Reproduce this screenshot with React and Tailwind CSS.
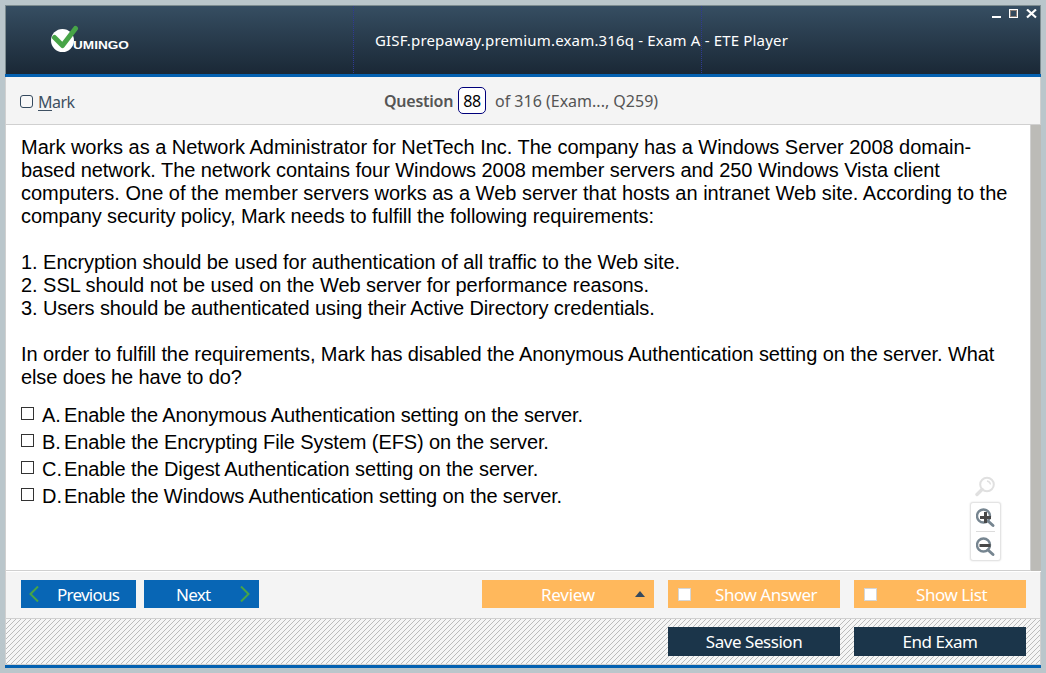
const question = [
  { text: 'Mark works as a Network Administrator for NetTech Inc. The company has a Windows Server 2008 domain-', track: 'tracking-[-0.02px]' },
  { text: 'based network. The network contains four Windows 2008 member servers and 250 Windows Vista client', track: 'tracking-[-0.055px]' },
  { text: 'computers. One of the member servers works as a Web server that hosts an intranet Web site. According to the', track: 'tracking-[0px]' },
  { text: 'company security policy, Mark needs to fulfill the following requirements:', track: 'tracking-[-0.08px]' },
  { text: '', track: '' },
  { text: '1. Encryption should be used for authentication of all traffic to the Web site.', track: 'tracking-[-0.05px]' },
  { text: '2. SSL should not be used on the Web server for performance reasons.', track: 'tracking-[-0.05px]' },
  { text: '3. Users should be authenticated using their Active Directory credentials.', track: 'tracking-[-0.12px]' },
  { text: '', track: '' },
  { text: 'In order to fulfill the requirements, Mark has disabled the Anonymous Authentication setting on the server. What', track: 'tracking-[-0.095px]' },
  { text: 'else does he have to do?', track: 'tracking-[-0.11px]' },
];

const answers = [
  { letter: 'A.', text: 'Enable the Anonymous Authentication setting on the server.', track: 'tracking-[-0.16px]' },
  { letter: 'B.', text: 'Enable the Encrypting File System (EFS) on the server.', track: 'tracking-[-0.1px]' },
  { letter: 'C.', text: 'Enable the Digest Authentication setting on the server.', track: 'tracking-[-0.11px]' },
  { letter: 'D.', text: 'Enable the Windows Authentication setting on the server.', track: 'tracking-[-0.12px]' },
];

function Logo() {
  return (
    <div className="relative flex h-[30px] w-[90px]">
      <svg width="30" height="28" viewBox="0 0 30 28" className="shrink-0">
        <circle cx="12.5" cy="15.5" r="11.5" fill="#fff" />
        <path d="M4.5 12.5 L12.5 20.5 L25.5 3.5" fill="none" stroke="#47a447" strokeWidth="5" strokeLinecap="round" strokeLinejoin="round" />
      </svg>
      <span className="absolute left-[23px] top-[16px] origin-left scale-x-[1.36] font-['Liberation_Sans'] text-[10px] font-bold leading-[10px] text-white">UMINGO</span>
    </div>
  );
}

function Header() {
  return (
    <header className="flex h-[69px] border-x border-t border-[#7d8c90] bg-linear-to-b from-[#364e62] to-[#1a2836]">
      <div className="w-[347px] shrink-0 pl-[44px] pt-[19px]">
        <Logo />
      </div>
      <div className="w-px shrink-0 bg-[repeating-linear-gradient(to_bottom,#2f3a94_0_1px,transparent_1px_2px)]" />
      <h1 className="flex w-[347px] shrink-0 justify-start whitespace-nowrap pl-[21px] pt-[23px] font-['Noto_Sans',sans-serif] text-[15px] leading-[22px] tracking-[0.17px] text-white">
        GISF.prepaway.premium.exam.316q - Exam A - ETE Player
      </h1>
      <div className="w-px shrink-0 bg-[repeating-linear-gradient(to_bottom,#2f3a94_0_1px,transparent_1px_2px)]" />
      <div className="flex flex-1 justify-end pr-[3px] pt-[3px]">
        <svg width="46" height="10" viewBox="0 0 46 10" shapeRendering="crispEdges">
          <rect x="1" y="7" width="9" height="2" fill="#fff" />
          <rect x="18.5" y="0.5" width="8" height="8" fill="none" stroke="#fff" />
          <rect x="19.5" y="1.5" width="6" height="6" fill="none" stroke="#8b7f78" />
          <path d="M36 0.5 L45 8.5 M45 0.5 L36 8.5" stroke="#fff" strokeWidth="2.2" shapeRendering="auto" />
        </svg>
      </div>
    </header>
  );
}

function QuestionBar() {
  return (
    <div className="flex h-[48px] items-start border-x border-b border-[#d0d0d0] bg-[#f4f4f4] font-['Noto_Sans',sans-serif] text-base leading-[22px] text-[#555]">
      <div className="flex w-[378px] pl-[14px] pt-[14px] text-[#3e5062]">
        <span className="mt-[4px] size-[13px] rounded-[3px] border border-[#34495e] bg-[#f8f8f8]" />
        <span className="ml-[5px] tracking-[-0.5px]"><span className="underline underline-offset-2">M</span>ark</span>
      </div>
      <span className="w-[70px] whitespace-nowrap pt-[13px] font-semibold tracking-[-0.25px]">Question</span>
      <span className="ml-[4px] mt-[10px] flex h-[27px] w-[28px] items-center justify-center rounded-[5px] border border-[#00007b] bg-white pt-px tracking-[-0.3px] text-black">88</span>
      <span className="ml-[9px] whitespace-nowrap pt-[13px]">of 316 (Exam..., Q259)</span>
    </div>
  );
}

function ZoomTools() {
  return (
    <div className="absolute left-[964px] top-[350px] flex flex-col items-center">
      <svg width="22" height="22" viewBox="1 0 22 22" fill="none" stroke="#e0e0e0">
        <circle cx="13" cy="9.5" r="6.8" strokeWidth="2" />
        <path d="M8 14.5 L3 19.5" strokeWidth="3.4" strokeLinecap="round" />
        <path d="M13 6 Q16 6.5 16.5 9.5" strokeWidth="1.3" />
      </svg>
      <div className="mt-[5px] flex h-[59px] w-[31px] flex-col items-center rounded-[3px] border border-[#e4e4e4] bg-white shadow-[0_0_2px_#ddd]">
        <svg width="20" height="28" viewBox="1 0 20 28" fill="none">
          <circle cx="8.5" cy="13" r="6.5" stroke="#768590" strokeWidth="2.4" />
          <path d="M13 18 L18 22.5" stroke="#768590" strokeWidth="3" strokeLinecap="round" />
          <path d="M5 14.5 H16 M10.5 9 V20" stroke="#484848" strokeWidth="3" />
        </svg>
        <div className="h-px w-[19px] shrink-0 bg-[#dcdcdc]" />
        <svg width="20" height="28" viewBox="1 0 20 28" fill="none">
          <circle cx="8.5" cy="13" r="6.5" stroke="#768590" strokeWidth="2.4" />
          <path d="M13 18 L18 22.5" stroke="#768590" strokeWidth="3" strokeLinecap="round" />
          <path d="M4.5 13.5 H15.5" stroke="#484848" strokeWidth="3" />
        </svg>
      </div>
    </div>
  );
}

function Content() {
  return (
    <main className="relative flex h-[447px] border-l border-[#d0d0d0] bg-white">
      <div className="h-[446px] flex-1 border-b border-[#d0d0d0] pl-[15px] pt-[11px] font-['Liberation_Sans',sans-serif] text-[20px] text-black">
        {question.map((line, i) => (
          <p key={i} className="h-[23px] whitespace-nowrap leading-[23px]">
            <span className={line.track}>{line.text}</span>
          </p>
        ))}
        <div className="mt-[13px]">
          {answers.map((a) => (
            <div key={a.letter} className="flex h-[27px] whitespace-nowrap leading-[27px]">
              <span className="mt-[5px] size-[13px] shrink-0 border border-[#333] bg-white" />
              <span className="ml-[8px] w-[22px] shrink-0">{a.letter}</span>
              <span className={a.track}>{a.text}</span>
            </div>
          ))}
        </div>
      </div>
      <div className="h-[446px] w-[11px] shrink-0 border-l border-[#d0d0d0] bg-[#bcbbb7]" />
      <ZoomTools />
    </main>
  );
}

function Toolbar() {
  return (
    <div className="flex h-[47px] border-x border-b border-[#d0d0d0] bg-[#f4f4f4] pl-[15px] pt-[8px] font-['Noto_Sans',sans-serif] text-[17px] leading-[26px] text-white">
      <button className="flex h-[28px] w-[115px] items-center bg-[#0866b5] pl-[8px]">
        <svg width="10" height="16" viewBox="0 0 10 16"><path d="M9 0.5 L1.5 8 L9 15.5" fill="none" stroke="#47a447" strokeWidth="2" /></svg>
        <span className="ml-[18px] pt-[2px] tracking-[-0.75px]">Previous</span>
      </button>
      <button className="ml-[8px] flex h-[28px] w-[115px] items-center bg-[#0866b5] pl-[32px]">
        <span className="w-[64px] pt-[2px] text-left tracking-[-0.75px]">Next</span>
        <svg width="10" height="16" viewBox="0 0 10 16"><path d="M1 0.5 L8.5 8 L1 15.5" fill="none" stroke="#47a447" strokeWidth="2" /></svg>
      </button>
      <button className="ml-[223px] flex h-[28px] w-[172px] items-center bg-[#ffb85c] pl-[59px]">
        <span className="w-[94px] pt-[2px] text-left tracking-[-0.25px]">Review</span>
        <svg width="10" height="6" viewBox="0 0 10 6"><path d="M5 0 L10 6 H0 Z" fill="#34495e" /></svg>
      </button>
      <button className="ml-[14px] flex h-[28px] w-[172px] items-center bg-[#ffb85c] pl-[10px]">
        <span className="size-[13px] border border-[#d5d5d5] bg-white" />
        <span className="ml-[24px] pt-[2px] tracking-[-0.45px]">Show Answer</span>
      </button>
      <button className="ml-[14px] flex h-[28px] w-[172px] items-center bg-[#ffb85c] pl-[10px]">
        <span className="size-[13px] border border-[#d5d5d5] bg-white" />
        <span className="ml-[39px] pt-[2px] tracking-[-0.45px]">Show List</span>
      </button>
    </div>
  );
}

function Hatching() {
  return (
    <svg className="absolute inset-0 h-full w-full" shapeRendering="crispEdges" aria-hidden="true">
      <defs>
        <pattern id="hatch" width="5" height="5" patternUnits="userSpaceOnUse">
          <path d="M4 0h1v1h-1z M3 1h1v1h-1z M2 2h1v1h-1z M1 3h1v1h-1z M0 4h1v1h-1z" fill="#bcbcbc" />
        </pattern>
      </defs>
      <rect width="100%" height="100%" fill="url(#hatch)" />
    </svg>
  );
}

function Footer() {
  return (
    <footer className="relative flex h-[46px] justify-end gap-[14px] border-x border-b border-[#d0d0d0] bg-[#f6f6f6] pr-[14px] pt-[8px] font-['Noto_Sans',sans-serif] text-[17px] tracking-[-0.45px] text-white">
      <Hatching />
      <button className="relative h-[29px] w-[172px] bg-[#1b354a]">Save Session</button>
      <button className="relative h-[29px] w-[172px] bg-[#1b354a]">End Exam</button>
    </footer>
  );
}

export default function App() {
  return (
    <div className="h-[673px] w-[1046px] overflow-hidden bg-[#bac6cb] pl-[5px] pt-[5px]">
      <div className="w-[1036px]">
        <Header />
        <div className="h-[3px] bg-[#0461b1]" />
        <QuestionBar />
        <Content />
        <Toolbar />
        <Footer />
        <div className="h-[3px] bg-[#0461b1]" />
      </div>
    </div>
  );
}
